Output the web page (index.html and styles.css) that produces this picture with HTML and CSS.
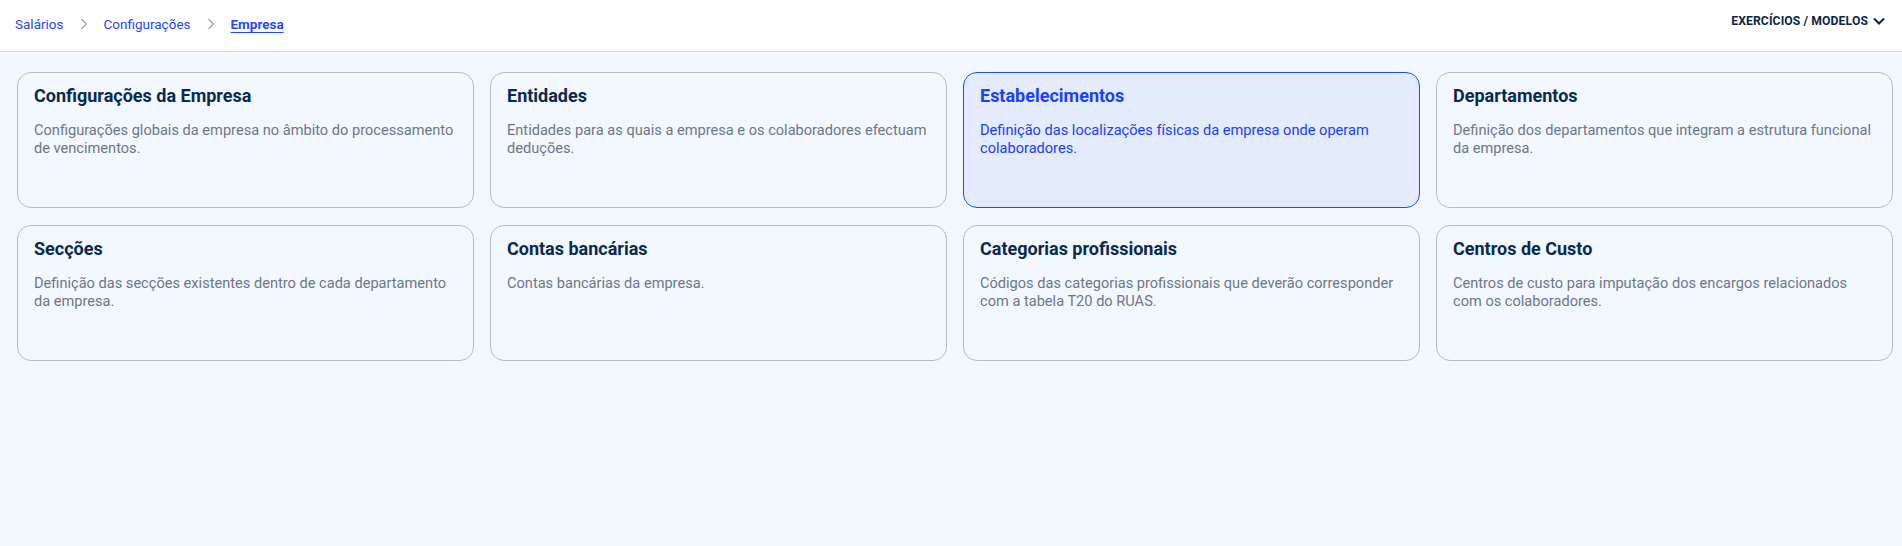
FILE: index.html
```html
<!DOCTYPE html>
<html lang="pt">
<head>
<meta charset="utf-8">
<title>Empresa</title>
<link rel="stylesheet" href="styles.css">
</head>
<body>
<header class="topbar">
  <nav class="crumbs">
    <a class="crumb" href="#">Salários</a>
    <svg class="sep" viewBox="0 0 8 12" width="8" height="12"><path d="M1.5 1 L6.5 6 L1.5 11" fill="none" stroke="currentColor" stroke-width="1.2"/></svg>
    <a class="crumb" href="#">Configurações</a>
    <svg class="sep" viewBox="0 0 8 12" width="8" height="12"><path d="M1.5 1 L6.5 6 L1.5 11" fill="none" stroke="currentColor" stroke-width="1.2"/></svg>
    <a class="crumb current" href="#">Empresa</a>
  </nav>
  <button class="menu">EXERCÍCIOS / MODELOS
    <svg class="caret" viewBox="0 0 12 8" width="12" height="8"><path d="M1 1.5 L6 6.5 L11 1.5" fill="none" stroke="currentColor" stroke-width="2"/></svg>
  </button>
</header>
<main class="grid">
  <a class="card" href="#"><h3 class="title">Configurações da Empresa</h3><p class="desc">Configurações globais da empresa no âmbito do processamento de vencimentos.</p></a>
  <a class="card" href="#"><h3 class="title">Entidades</h3><p class="desc">Entidades para as quais a empresa e os colaboradores efectuam deduções.</p></a>
  <a class="card active" href="#"><h3 class="title">Estabelecimentos</h3><p class="desc">Definição das localizações físicas da empresa onde operam colaboradores.</p></a>
  <a class="card" href="#"><h3 class="title">Departamentos</h3><p class="desc">Definição dos departamentos que integram a estrutura funcional da empresa.</p></a>
  <a class="card" href="#"><h3 class="title">Secções</h3><p class="desc">Definição das secções existentes dentro de cada departamento da empresa.</p></a>
  <a class="card" href="#"><h3 class="title">Contas bancárias</h3><p class="desc">Contas bancárias da empresa.</p></a>
  <a class="card" href="#"><h3 class="title">Categorias profissionais</h3><p class="desc">Códigos das categorias profissionais que deverão corresponder com a tabela T20 do RUAS.</p></a>
  <a class="card" href="#"><h3 class="title">Centros de Custo</h3><p class="desc">Centros de custo para imputação dos encargos relacionados com os colaboradores.</p></a>
</main>
</body>
</html>
```
FILE: styles.css
```css
* { box-sizing: border-box; }
html, body { margin: 0; padding: 0; }
body {
  font-family: Roboto, "Liberation Sans", sans-serif;
  background: #f3f7fe;
  min-height: 546px;
}
.topbar {
  height: 52px;
  background: #ffffff;
  border-bottom: 1px solid #d3d8e0;
  display: flex;
  align-items: center;
  justify-content: space-between;
  padding: 0 17px 4px 15px;
}
.crumbs {
  display: flex;
  align-items: center;
  gap: 16px;
}
.crumb {
  color: #2348ff;
  font-size: 13.5px;
  text-decoration: none;
  line-height: 20px;
}
.crumb.current {
  font-weight: 700;
  text-decoration: underline;
  text-underline-offset: 3px;
}
.sep { color: #9aa1ad; display: block; }
.menu {
  border: 0;
  background: none;
  padding: 0;
  margin-top: -6px;
  font-family: inherit;
  font-weight: 700;
  font-size: 12.2px;
  color: #0b2747;
  display: flex;
  align-items: center;
  gap: 5px;
  letter-spacing: 0.1px;
}
.caret { display: block; }
.grid {
  display: grid;
  grid-template-columns: repeat(4, 1fr);
  column-gap: 16px;
  row-gap: 17px;
  padding: 20px 9px 0 17px;
}
.card {
  display: block;
  height: 136px;
  border: 1px solid #b4bbca;
  border-radius: 14px;
  background: #f3f7fe;
  padding: 11px 16px;
  text-decoration: none;
}
.title {
  margin: 0;
  font-size: 18px;
  line-height: 24px;
  font-weight: 700;
  color: #082a4d;
}
.desc {
  margin: 13px 0 0;
  font-size: 14.6px;
  line-height: 18px;
  color: #6d7786;
}
.card.active {
  background: #e4ebfd;
  border-color: #1d4cff;
}
.card.active .title { color: #1a40ff; }
.card.active .desc { color: #1a40ff; }
```
